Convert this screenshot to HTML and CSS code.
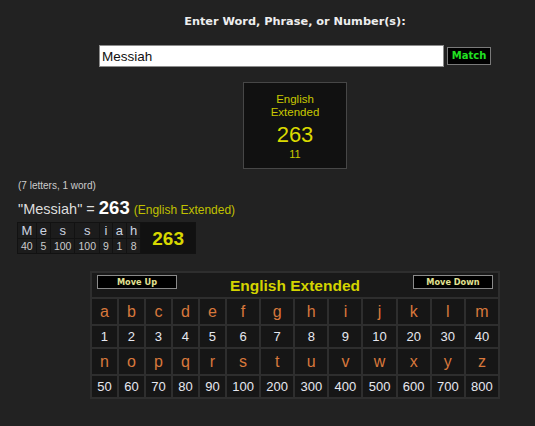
FILE: index.html
```html
<!DOCTYPE html>
<html lang="en">
<head>
<meta charset="utf-8">
<title>Gematria</title>
<link rel="stylesheet" href="styles.css">
</head>
<body>
<div class="page">
  <div class="centered">
    <h1 class="prompt">Enter Word, Phrase, or Number(s):</h1>
    <div class="search">
      <input class="query" type="text" value="Messiah">
      <button class="match" type="button">Match</button>
    </div>
    <div class="result-box">
      <div class="result-name">English<br>Extended</div>
      <div class="result-value">263</div>
      <div class="result-sub">11</div>
    </div>
  </div>
  <div class="summary">
    <p class="counts">(7 letters, 1 word)</p>
    <p class="equation">"Messiah" = <b class="eq-num">263</b> <span class="eq-cipher">(English Extended)</span></p>
    <table class="breakdown">
      <tr class="bd-letters">
        <td>M</td><td>e</td><td>s</td><td>s</td><td>i</td><td>a</td><td>h</td>
        <td class="bd-total" rowspan="2">263</td>
      </tr>
      <tr class="bd-values">
        <td>40</td><td>5</td><td>100</td><td>100</td><td>9</td><td>1</td><td>8</td>
      </tr>
    </table>
  </div>
  <div class="centered">
    <table class="cipher">
      <colgroup>
        <col class="c-narrow"><col class="c-narrow"><col class="c-narrow"><col class="c-narrow"><col class="c-narrow">
        <col class="c-wide"><col class="c-wide"><col class="c-wide"><col class="c-wide"><col class="c-wide"><col class="c-wide"><col class="c-wide"><col class="c-wide">
      </colgroup>
      <tr class="cipher-head">
        <td colspan="13">
          <div class="head-bar">
            <button class="move" type="button">Move Up</button>
            <span class="cipher-title">English Extended</span>
            <button class="move" type="button">Move Down</button>
          </div>
        </td>
      </tr>
      <tr class="row-letters">
        <td>a</td><td>b</td><td>c</td><td>d</td><td>e</td><td>f</td><td>g</td><td>h</td><td>i</td><td>j</td><td>k</td><td>l</td><td>m</td>
      </tr>
      <tr class="row-values">
        <td>1</td><td>2</td><td>3</td><td>4</td><td>5</td><td>6</td><td>7</td><td>8</td><td>9</td><td>10</td><td>20</td><td>30</td><td>40</td>
      </tr>
      <tr class="row-letters">
        <td>n</td><td>o</td><td>p</td><td>q</td><td>r</td><td>s</td><td>t</td><td>u</td><td>v</td><td>w</td><td>x</td><td>y</td><td>z</td>
      </tr>
      <tr class="row-values">
        <td>50</td><td>60</td><td>70</td><td>80</td><td>90</td><td>100</td><td>200</td><td>300</td><td>400</td><td>500</td><td>600</td><td>700</td><td>800</td>
      </tr>
    </table>
  </div>
</div>
</body>
</html>
```
FILE: styles.css
```css
html, body {
  margin: 0;
  padding: 0;
  background: #222222;
}
body {
  font-family: "Liberation Sans", Arial, sans-serif;
  color: #dddddd;
}
.page {
  width: 535px;
  height: 426px;
  overflow: hidden;
}
.centered {
  padding-left: 55px;
}
.prompt {
  margin: 0;
  padding-top: 15px;
  font-family: "DejaVu Sans", Verdana, sans-serif;
  font-weight: bold;
  font-size: 11.3px;
  line-height: 14px;
  color: #eeeeee;
  text-align: center;
}
.search {
  margin-top: 16px;
  display: flex;
  justify-content: center;
  align-items: center;
  gap: 3px;
}
.query {
  width: 345px;
  height: 22px;
  box-sizing: border-box;
  margin: 0;
  border: 1px solid #8c8c8c;
  background: #ffffff;
  padding: 0 2px;
  font-family: "Liberation Sans", Arial, sans-serif;
  font-size: 13.5px;
  color: #111111;
  outline: none;
}
.match {
  width: 44px;
  height: 18px;
  box-sizing: border-box;
  margin: 0;
  padding: 0;
  border: 1px solid #7a7a7a;
  background: #000000;
  color: #22e022;
  font-family: "DejaVu Sans", Verdana, sans-serif;
  font-weight: bold;
  font-size: 10px;
  line-height: 16px;
}
.result-box {
  margin: 15px auto 0;
  width: 104px;
  height: 87px;
  box-sizing: border-box;
  border: 1px solid #474747;
  background: #111111;
  text-align: center;
  padding-top: 10px;
}
.result-name {
  font-size: 11.5px;
  line-height: 13px;
  color: #c8c800;
}
.result-value {
  margin-top: 4px;
  font-size: 22px;
  line-height: 24px;
  color: #dada00;
}
.result-sub {
  margin-top: 1px;
  font-size: 11px;
  line-height: 13px;
  color: #c8c800;
}
.summary {
  padding-left: 17px;
}
.counts {
  margin: 11px 0 0 1px;
  font-size: 10px;
  line-height: 12px;
  color: #cccccc;
}
.equation {
  margin: 7px 0 0 1px;
  font-size: 14.5px;
  line-height: 18px;
  color: #dddddd;
}
.eq-num {
  font-size: 18.5px;
  color: #ffffff;
}
.eq-cipher {
  font-size: 12px;
  color: #c0c000;
}
.breakdown {
  margin-top: 3px;
  border-collapse: separate;
  border-spacing: 1px;
  background: #121212;
}
.breakdown td {
  background: #1c1c1c;
  text-align: center;
  padding: 0 3px;
}
.bd-letters td {
  height: 15px;
  font-size: 13px;
  line-height: 15px;
  color: #ccd4e0;
}
.bd-values td {
  height: 14px;
  font-size: 10.5px;
  line-height: 14px;
  color: #cccccc;
}
.breakdown .bd-total {
  background: #111111;
  padding: 0 11px;
  font-size: 19px;
  font-weight: bold;
  color: #d8d800;
}
.cipher {
  margin: 17px auto 0;
  width: 408px;
  table-layout: fixed;
  border-collapse: collapse;
  background: #161616;
}
.c-narrow { width: 27px; }
.c-wide { width: 34.125px; }
.cipher td {
  border: 2px solid #2e2e2e;
  text-align: center;
  padding: 0;
}
.cipher-head td {
  height: 24px;
  vertical-align: top;
  background: #191919;
}
.head-bar {
  display: flex;
  justify-content: space-between;
  align-items: flex-start;
  padding: 2px 5px 0;
}
.move {
  width: 80px;
  height: 14px;
  box-sizing: border-box;
  margin: 0;
  padding: 0;
  border: 1px solid #8a8a8a;
  background: #000000;
  color: #e2e292;
  font-family: "DejaVu Sans", Verdana, sans-serif;
  font-weight: bold;
  font-size: 8.2px;
  line-height: 12px;
}
.cipher-title {
  margin-top: 2px;
  font-size: 15.5px;
  font-weight: bold;
  line-height: 18px;
  color: #d4d400;
}
.row-letters td {
  height: 25px;
  font-size: 16px;
  color: #d8783c;
}
.row-values td {
  height: 21px;
  font-size: 13px;
  color: #e6e8f0;
}
```
